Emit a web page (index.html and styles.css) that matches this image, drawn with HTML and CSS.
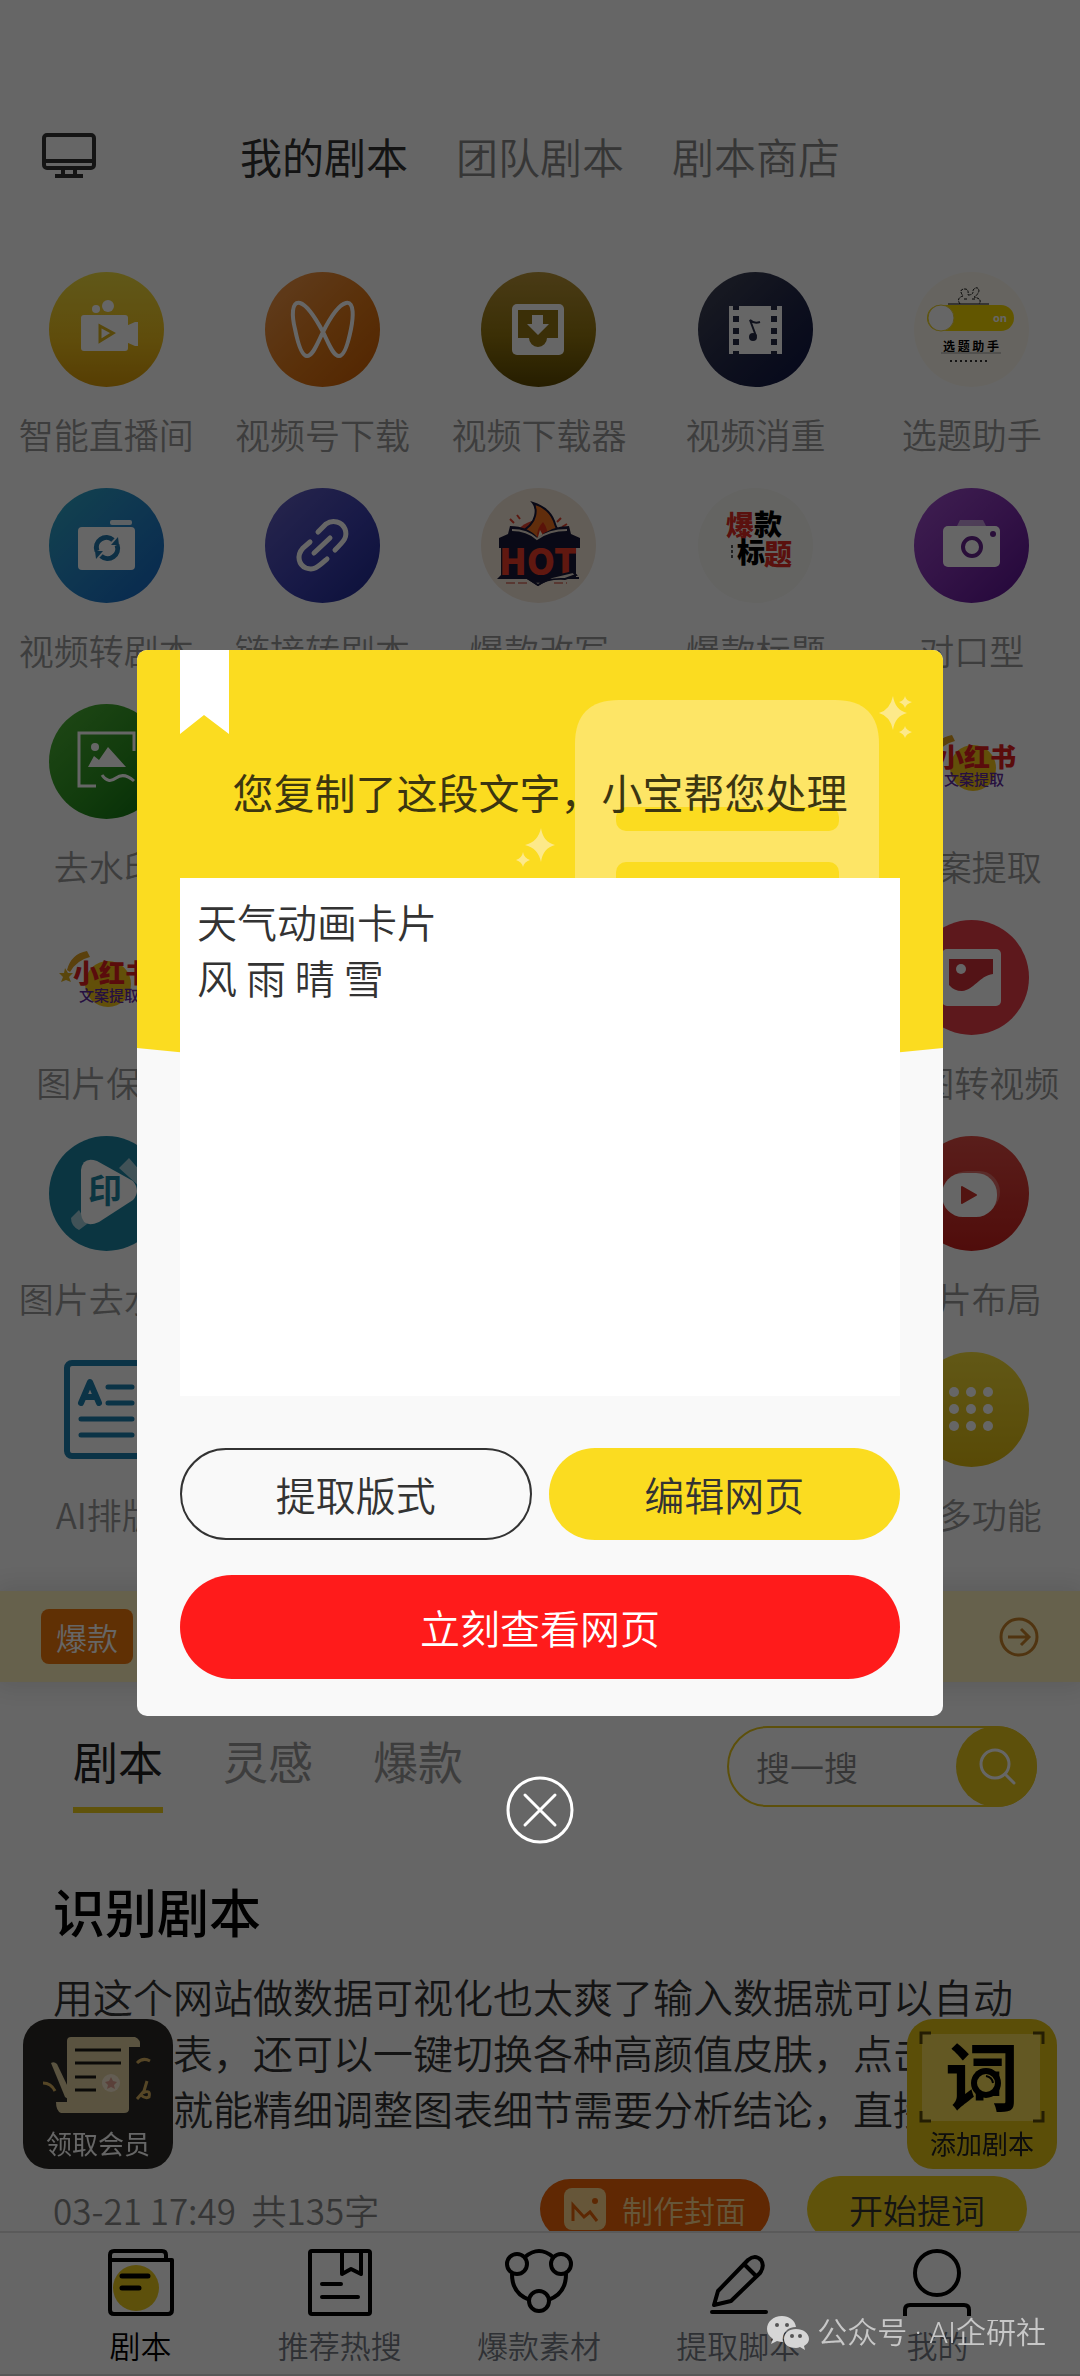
FILE: index.html
```html
<!DOCTYPE html>
<html lang="zh-CN">
<head>
    <meta charset="UTF-8" />
    <meta name="viewport" content="width=device-width, initial-scale=1">
    <title>我的剧本</title>
    <link rel="stylesheet" href="styles.css">
</head>
<body>
    <!-- shared logo, used by two tools -->
    <svg class="defs" aria-hidden="true">
        <symbol id="xhs" viewBox="0 0 115 115">
            <circle cx="59" cy="64" r="23" fill="#f5c518" />
            <path d="M18 50 Q22 34 38 31 L41 37 Q28 40 21 52 Z" fill="#e0a020" />
            <path d="M16 48 L19 53 L24 53 L20 57 L22 62 L17 60 L12 62 L14 57 L10 53 L15 53 Z" fill="#e0b020" />
            <text x="63" y="63" class="xhs-name">小红书</text>
            <text x="60" y="81" class="xhs-sub">文案提取</text>
        </symbol>
    </svg>

    <div class="app">
        <main class="page">
            <header class="topbar">
                <button class="screen-btn" aria-label="投屏">
                    <svg viewBox="0 0 54 46" fill="none" stroke="#333" stroke-width="4" stroke-linejoin="round">
                        <rect x="2" y="2" width="50" height="33" rx="3" />
                        <path d="M2 28 H52 M21 36 V42 M33 36 V42 M13 43 H41" />
                    </svg>
                </button>
                <nav class="top-tabs">
                    <a href="#" class="active">我的剧本</a>
                    <a href="#">团队剧本</a>
                    <a href="#">剧本商店</a>
                </nav>
            </header>

            <section class="tools">
                <a href="#" class="tool">
                    <svg class="tool-icon bg-yellow" viewBox="0 0 115 115" fill="#fff">
                        <circle cx="47" cy="37" r="4" />
                        <circle cx="59" cy="34" r="6" />
                        <rect x="32" y="43" width="47" height="36" rx="3" />
                        <path d="M77 54 L86 50 H89 V74 H86 L77 70 Z" />
                        <path d="M51 54 L64 61 L51 69 Z" fill="none" stroke="#dcb41c" stroke-width="3" />
                    </svg>
                    <span>智能直播间</span>
                </a>
                <a href="#" class="tool">
                    <svg class="tool-icon bg-orange" viewBox="0 0 115 115" fill="none" stroke="#fff" stroke-width="4">
                        <path d="M58 60 C50 45 42 33 35 31 C26 29 27 45 30 57 C33 72 37 84 42 84 C48 84 52 72 58 60 C64 48 73 33 81 31 C90 29 88 47 86 57 C83 72 79 84 74 84 C68 84 64 72 58 60 Z" />
                    </svg>
                    <span>视频号下载</span>
                </a>
                <a href="#" class="tool">
                    <svg class="tool-icon bg-olive" viewBox="0 0 115 115" fill="#fff">
                        <rect x="31" y="32" width="52" height="51" rx="5" />
                        <path d="M37 38 H77 V66 H66 A9 9 0 0 1 48 66 H37 Z" fill="#947613" />
                        <path d="M51 43 H62 V52 H68 L57 63 L46 52 H51 Z" />
                    </svg>
                    <span>视频下载器</span>
                </a>
                <a href="#" class="tool">
                    <svg class="tool-icon bg-navy" viewBox="0 0 115 115" fill="#fff">
                        <rect x="31" y="34" width="53" height="48" />
                        <path d="M35 34 h6 v4 h-6 Z M35 44 h6 v6 h-6 Z M35 56 h6 v6 h-6 Z M35 67 h6 v6 h-6 Z M35 79 h6 v3 h-6 Z M73 34 h6 v4 h-6 Z M73 44 h6 v6 h-6 Z M73 56 h6 v6 h-6 Z M73 67 h6 v6 h-6 Z M73 79 h6 v3 h-6 Z" fill="#262c48" />
                        <circle cx="55" cy="65" r="4" fill="#262c48" />
                        <path d="M58 64 L52 48 Q56 52 62 50" fill="none" stroke="#262c48" stroke-width="2" />
                    </svg>
                    <span>视频消重</span>
                </a>
                <a href="#" class="tool">
                    <svg class="tool-icon bg-cream" viewBox="0 0 115 115">
                        <path d="M46 32 Q42 26 49 24 Q44 17 51 17 Q55 17 54 23 Q60 23 59 18 Q64 13 65 19 Q63 24 60 25 Q69 27 65 32 M50 27 h3 M58 27 h3" fill="none" stroke="#111" stroke-dasharray="3 1" />
                        <rect x="13" y="33" width="87" height="26" rx="13" fill="#f5d800" />
                        <path d="M34 32 H75" stroke="#111" stroke-width="1" />
                        <circle cx="27" cy="46" r="13" fill="#fff" stroke="#e8cf3a" />
                        <text x="86" y="50" class="pick-on">on</text>
                        <text x="57" y="79" class="pick-name">选 题 助 手</text>
                        <path d="M27 81 H87" stroke="#999" stroke-width="1" />
                        <path d="M36 89 H76" stroke="#333" stroke-width="2" stroke-dasharray="2 3" />
                    </svg>
                    <span>选题助手</span>
                </a>

                <a href="#" class="tool">
                    <svg class="tool-icon bg-blue" viewBox="0 0 115 115" fill="#fff">
                        <rect x="61" y="32" width="22" height="5" rx="2" opacity="0.9" />
                        <rect x="29" y="39" width="57" height="43" rx="4" />
                        <g fill="none" stroke="#2277ab" stroke-width="5">
                            <path d="M48 63 A10 10 0 0 1 64 52" />
                            <path d="M68 57 A10 10 0 0 1 52 68" />
                        </g>
                        <path d="M62 57 L70 57 L69 49 Z M54 63 L46 63 L47 71 Z" fill="#2277ab" />
                    </svg>
                    <span>视频转剧本</span>
                </a>
                <a href="#" class="tool">
                    <svg class="tool-icon bg-indigo" viewBox="0 0 115 115" fill="none" stroke="#fff" stroke-width="5" stroke-linecap="round">
                        <path d="M49 65 L65 50" />
                        <path d="M53 44 L61 36 C68 31 77 34 80 41 C83 49 79 53 70 62" />
                        <path d="M45 54 L38 60 C31 68 34 77 41 80 C49 83 53 79 62 71" />
                    </svg>
                    <span>链接转剧本</span>
                </a>
                <a href="#" class="tool">
                    <svg class="tool-icon bg-beige" viewBox="0 0 115 115">
                        <path d="M34 48 A25 22 0 0 1 82 48 Z" fill="#e0402c" />
                        <path d="M29 31 L33 35 M36 27 L39 31 M80 30 L76 34 M86 36 L81 39" stroke="#e0402c" stroke-width="2" />
                        <path d="M37 46 Q52 38 54 28 Q56 20 52 15 Q68 20 73 33 Q76 43 80 47 L68 53 H48 Z" fill="#f07020" stroke="#181838" stroke-width="2" />
                        <path d="M56 49 Q56 40 62 34 Q68 42 66 50 Z" fill="#e03018" />
                        <path d="M57 49 L59 42 L63 49 Z" fill="#fff0d0" />
                        <path d="M18 50 L27 46 L29 38 Q47 38 57 50 Q70 38 88 38 L90 46 L99 50 V60 H95 V89 H98 V91 H70 L57 98 L46 91 H16 L20 87 V60 H18 Z" fill="#181838" />
                        <path d="M31 42 Q46 42 56 51 Q68 42 86 42" fill="none" stroke="#e8ddd0" stroke-width="2" />
                        <text x="57" y="87" class="hot-text">HOT</text>
                        <path d="M46 90 Q57 98 71 89 L92 84 L95 87 L84 91 Q66 90 57 97 Z" fill="#e8ddd0" stroke="#181838" stroke-width="2" />
                        <path d="M25 95 H48 M73 95 H86" stroke="#c03020" stroke-dasharray="9 3" />
                    </svg>
                    <span>爆款改写</span>
                </a>
                <a href="#" class="tool">
                    <svg class="tool-icon bg-grey" viewBox="0 0 115 115">
                        <text x="28" y="48" class="brush red">爆</text>
                        <text x="56" y="47" class="brush">款</text>
                        <text x="39" y="75" class="brush">标</text>
                        <text x="66" y="77" class="brush red">题</text>
                        <path d="M34 57 V72" stroke="#555" stroke-width="2" stroke-dasharray="3 2" />
                    </svg>
                    <span>爆款标题</span>
                </a>
                <a href="#" class="tool">
                    <svg class="tool-icon bg-purple" viewBox="0 0 115 115" fill="#fff">
                        <path d="M43 38 L46 32 H69 L72 38 Z" opacity="0.5" />
                        <rect x="29" y="38" width="57" height="41" rx="5" />
                        <circle cx="58" cy="59" r="9" fill="none" stroke="#66258f" stroke-width="4" />
                        <circle cx="79" cy="46" r="3" fill="#66258f" />
                    </svg>
                    <span>对口型</span>
                </a>

                <a href="#" class="tool">
                    <svg class="tool-icon bg-green" viewBox="0 0 115 115" fill="#fff">
                        <path d="M85 47 V29 H30 V82 H47 M53 71 Q59 80 67 74 T85 77" fill="none" stroke="#fff" stroke-width="3" />
                        <circle cx="46" cy="43" r="4" />
                        <path d="M39 63 L45 52 L50 56 L59 43 L77 63 Z" />
                    </svg>
                    <span>去水印</span>
                </a>
                <a href="#" class="tool last">
                    <svg class="tool-icon"><use href="#xhs" /></svg>
                    <span>文案提取</span>
                </a>

                <a href="#" class="tool">
                    <svg class="tool-icon"><use href="#xhs" /></svg>
                    <span>图片保存</span>
                </a>
                <a href="#" class="tool last">
                    <svg class="tool-icon bg-crimson" viewBox="0 0 115 115" fill="#fff">
                        <rect x="28" y="29" width="59" height="57" rx="5" />
                        <path d="M35 39 H79 V54 C65 56 60 70 48 71 Q40 71 35 65 Z" fill="#d03038" />
                        <circle cx="47" cy="49" r="5" />
                    </svg>
                    <span>长图转视频</span>
                </a>

                <a href="#" class="tool">
                    <svg class="tool-icon bg-teal" viewBox="0 0 115 115" fill="#fff">
                        <path d="M70 32 L80 22 L92 36 L90 50 Z M30 74 L22 82 Q22 90 30 94 L38 88 Z" opacity="0.6" />
                        <path d="M32 34 Q34 20 48 25 L84 45 Q92 55 84 64 L50 86 Q34 93 32 78 Z" />
                        <text x="56" y="67" class="seal">印</text>
                    </svg>
                    <span>图片去水印</span>
                </a>
                <a href="#" class="tool last">
                    <svg class="tool-icon bg-red" viewBox="0 0 115 115" fill="#fff">
                        <rect x="32" y="35" width="54" height="42" rx="21" opacity="0.25" />
                        <rect x="28" y="37" width="55" height="44" rx="21" />
                        <path d="M48 51 L62 59 L48 67 Z" fill="#cc342c" stroke="#cc342c" stroke-width="2" stroke-linejoin="round" />
                    </svg>
                    <span>图片布局</span>
                </a>

                <a href="#" class="tool">
                    <svg class="tool-icon square" viewBox="0 0 115 115" fill="none" stroke="#1c7fae" stroke-width="6" stroke-linecap="round" stroke-linejoin="round">
                        <rect x="18" y="11" width="84" height="93" rx="5" />
                        <path d="M32 51 L41 30 L50 51 M35 45 H47" />
                        <path d="M59 35 H83 M59 51 H83 M32 67 H83 M32 83 H83" stroke-width="5" />
                    </svg>
                    <span>AI排版</span>
                </a>
                <a href="#" class="tool last">
                    <svg class="tool-icon bg-lemon" viewBox="0 0 115 115" fill="#fff">
                        <circle cx="40" cy="40" r="5" /><circle cx="57" cy="40" r="5" /><circle cx="74" cy="40" r="5" />
                        <circle cx="40" cy="57" r="5" /><circle cx="57" cy="57" r="5" /><circle cx="74" cy="57" r="5" />
                        <circle cx="40" cy="74" r="5" /><circle cx="57" cy="74" r="5" /><circle cx="74" cy="74" r="5" />
                    </svg>
                    <span>更多功能</span>
                </a>
            </section>

            <a href="#" class="notice">
                <span class="notice-tag">爆款</span>
                <svg class="notice-arrow" viewBox="0 0 40 40" fill="none" stroke="#c8822a" stroke-width="3">
                    <circle cx="20" cy="20" r="18" />
                    <path d="M9 20 H30 M22 12 L30 20 L22 28" />
                </svg>
            </a>

            <section class="filter">
                <nav class="filter-tabs">
                    <a href="#" class="active">剧本</a>
                    <a href="#">灵感</a>
                    <a href="#">爆款</a>
                </nav>
                <form class="search">
                    <input type="text" placeholder="搜一搜" aria-label="搜一搜">
                    <button type="button" aria-label="搜索">
                        <svg viewBox="0 0 40 40" fill="none" stroke="#fff" stroke-width="3" stroke-linecap="round">
                            <circle cx="18" cy="17" r="14" />
                            <path d="M28 27 L37 36" />
                        </svg>
                    </button>
                </form>
            </section>

            <article class="script">
                <h2>识别剧本</h2>
                <p>用这个网站做数据可视化也太爽了输入数据就可以自动生成图表，还可以一键切换各种高颜值皮肤，点击图表的元素就能精细调整图表细节需要分析结论，直接提问</p>
                <div class="script-foot">
                    <span class="script-meta">03-21 17:49&nbsp; 共135字</span>
                    <button class="cover-btn">
                        <svg viewBox="0 0 42 42">
                            <rect width="42" height="42" rx="8" fill="#ffd890" />
                            <path d="M9 33 V17 L20 29 L26 24 L33 33" fill="none" stroke="#e86408" stroke-width="3" />
                            <circle cx="31" cy="13" r="3" fill="#e86408" />
                        </svg>
                        制作封面
                    </button>
                    <button class="start-btn">开始提词</button>
                </div>
            </article>
        </main>

        <nav class="tabbar">
            <a href="#" class="active">
                <svg viewBox="0 0 68 68" fill="none" stroke="#000" stroke-width="4" stroke-linecap="round" stroke-linejoin="round">
                    <circle cx="29" cy="40" r="23" fill="#e8c81c" stroke="none" />
                    <path d="M3 12 V7 Q3 3 7 3 H55 Q59 3 59 7 V12 M3 12 H65 V62 Q65 66 61 66 H7 Q3 66 3 62 Z" />
                    <path d="M15 28 H41 M15 40 H32" stroke-width="5" />
                </svg>
                <span>剧本</span>
            </a>
            <a href="#">
                <svg viewBox="0 0 68 68" fill="none" stroke="#000" stroke-width="4" stroke-linecap="round" stroke-linejoin="round">
                    <rect x="4" y="3" width="60" height="63" rx="2" />
                    <path d="M36 4 V26 L45 21 L55 26 V4 M16 36 H35 M16 49 H52" />
                </svg>
                <span>推荐热搜</span>
            </a>
            <a href="#">
                <svg viewBox="0 0 68 68" fill="none" stroke="#000" stroke-width="4">
                    <path d="M20 9 Q34 -3 48 9 M7 26 Q7 46 25 52 M61 26 Q61 46 43 52" />
                    <circle cx="12" cy="16" r="10" />
                    <circle cx="56" cy="16" r="10" />
                    <circle cx="34" cy="53" r="10" />
                </svg>
                <span>爆款素材</span>
            </a>
            <a href="#">
                <svg viewBox="0 0 68 68" fill="none" stroke="#000" stroke-width="4" stroke-linecap="round" stroke-linejoin="round">
                    <path d="M10 57 L14 43 L44 12 Q51 6 57 12 Q61 18 56 25 L27 53 Z M40 16 L52 28 M8 64 H62" />
                </svg>
                <span>提取脚本</span>
            </a>
            <a href="#">
                <svg viewBox="0 0 68 68" fill="none" stroke="#000" stroke-width="4">
                    <circle cx="34" cy="25" r="22" />
                    <path d="M2 68 V62 Q2 57 7 57 H61 Q66 57 66 62 V68" />
                </svg>
                <span>我的</span>
            </a>
        </nav>

        <button class="float float-vip">
            <svg viewBox="0 0 150 150">
                <path d="M44 22 Q44 18 48 18 H112 Q118 20 117 28 H106 V90 Q106 94 101 94 H38 Q33 92 33 83 H44 Z" fill="#e0d0a0" />
                <path d="M52 31 H98 M52 44 H98 M52 58 H73 M52 71 H73" stroke="#1c1a14" stroke-width="3" />
                <circle cx="88" cy="64" r="9" fill="#f8e8d0" />
                <path d="M88 58 L90 62 L94 63 L91 66 L92 70 L88 68 L84 70 L85 66 L82 63 L86 62 Z" fill="#e0a090" />
                <path d="M28 44 Q31 42 34 45 L45 68 V80 L42 78 Z" fill="#e0d0a0" />
                <path d="M20 64 Q28 64 32 72 M114 44 Q120 38 127 42 M124 62 L121 72 L114 80 M120 74 Q128 70 126 78 Q122 80 118 76" fill="none" stroke="#d8b060" stroke-width="3" />
            </svg>
            <span>领取会员</span>
        </button>
        <button class="float float-add">
            <svg viewBox="0 0 150 150">
                <rect x="15" y="15" width="118" height="87" fill="#f8dc58" />
                <path d="M14 25 V14 H24 M126 14 H136 V25 M136 92 V102 H126 M24 102 H14 V92" fill="none" stroke="#5a4a08" stroke-width="3" />
                <text x="75" y="86" class="word">词</text>
                <circle cx="79" cy="64" r="12" fill="#f8dc58" stroke="#000" stroke-width="6" />
                <path d="M79 57 Q85 58 86 64" fill="none" stroke="#000" stroke-width="2" />
            </svg>
            <span>添加剧本</span>
        </button>
    </div>

    <div class="overlay">
        <div class="dialog" role="dialog" aria-labelledby="dialogTitle">
            <svg class="dialog-art" viewBox="0 0 806 406" preserveAspectRatio="none" aria-hidden="true">
                <path d="M0 0 H806 V398 Q403 440 0 398 Z" fill="#fbdc20" />
                <path d="M43 0 H92 V84 L67 65 L43 84 Z" fill="#fff" />
                <path d="M438 406 V94 Q438 50 482 50 H698 Q742 50 742 94 V406 Z" fill="#fde566" />
                <rect x="479" y="157" width="223" height="24" rx="10" fill="#fbdc20" />
                <rect x="479" y="212" width="223" height="60" rx="10" fill="#fbdc20" />
                <g fill="#fde98a">
                    <path d="M756 46 Q758 60 770 63 Q758 66 756 80 Q753 66 742 63 Q753 60 756 46 Z" />
                    <path d="M768 46 Q769 51 775 52 Q769 54 768 58 Q767 54 762 52 Q767 51 768 46 Z" />
                    <path d="M768 76 Q769 80 775 82 Q769 84 768 88 Q767 84 762 82 Q767 80 768 76 Z" />
                    <path d="M404 178 Q406 192 418 195 Q406 198 404 212 Q401 198 388 195 Q401 192 404 178 Z" />
                    <path d="M386 202 Q387 208 393 210 Q387 212 386 217 Q385 212 379 210 Q385 208 386 202 Z" />
                </g>
            </svg>
            <h1 id="dialogTitle">您复制了这段文字，小宝帮您处理</h1>
            <textarea aria-labelledby="dialogTitle" spellcheck="false">天气动画卡片
风 雨 晴 雪</textarea>
            <div class="dialog-row">
                <button class="btn btn-line">提取版式</button>
                <button class="btn btn-yellow">编辑网页</button>
            </div>
            <button class="btn btn-red">立刻查看网页</button>
        </div>
        <button class="close" aria-label="关闭">
            <svg viewBox="0 0 68 68" fill="none" stroke="#fff" stroke-width="3" stroke-linecap="round">
                <circle cx="34" cy="34" r="32" />
                <path d="M19 19 L49 49 M49 19 L19 49" />
            </svg>
        </button>
    </div>

    <div class="watermark">
        <svg viewBox="0 0 42 34" fill="#d6d6d6">
            <path d="M15 0 C6 0 0 6 0 13 C0 17 2 20 6 23 L4 28 L10 25 Q13 26 16 26 C14 17 21 11 29 11 C28 4 22 0 15 0 Z" />
            <path d="M29 13 C22 13 17 17 17 23 C17 29 22 32 29 32 Q31 32 33 31 L38 34 L37 30 C40 28 42 26 42 23 C42 17 36 13 29 13 Z" />
            <g fill="#555">
                <circle cx="10" cy="9" r="2" /><circle cx="20" cy="9" r="2" />
                <circle cx="25" cy="20" r="2" /><circle cx="33" cy="20" r="2" />
            </g>
        </svg>
        <span>公众号 · AI企研社</span>
    </div>
</body>
</html>
```

FILE: styles.css
```css
:root {
    --yellow: #fbdc20;
    --text: #333;
    --muted: #999;
}

* {
    box-sizing: border-box;
}

body {
    margin: 0;
    font-family: "Noto Sans CJK SC", sans-serif;
    font-weight: 350;
    color: var(--text);
    background: #fff;
}

a {
    color: inherit;
    text-decoration: none;
}

button,
input,
textarea {
    font: inherit;
    color: inherit;
    border: none;
    padding: 0;
    background: none;
}

svg {
    display: block;
}

.defs {
    position: absolute;
    width: 0;
    height: 0;
}

.app {
    height: 100vh;
    display: flex;
    flex-direction: column;
    overflow: hidden;
}

.page {
    flex: 1;
    min-height: 0;
    overflow: hidden;
}

/* top bar */
.topbar {
    display: grid;
    grid-template-columns: 120px 1fr 120px;
    align-items: center;
    padding-top: 126px;
}

.screen-btn {
    width: 54px;
    margin-left: 42px;
}

.top-tabs {
    display: flex;
    justify-content: center;
    gap: 48px;
    font-size: 42px;
    line-height: 60px;
    color: #888;
}

.top-tabs .active {
    color: var(--text);
    font-weight: 400;
}

/* tools */
.tools {
    display: grid;
    grid-template-columns: repeat(5, 1fr);
    grid-auto-rows: 216px;
    margin-left: -2px;
    padding-top: 86px;
}

.tool {
    display: flex;
    flex-direction: column;
    align-items: center;
    gap: 22px;
    font-size: 35px;
    line-height: 50px;
    color: var(--muted);
    white-space: nowrap;
}

.tool.last {
    grid-column: 5;
}

.tool-icon {
    width: 115px;
    height: 115px;
    border-radius: 50%;
}

.tool-icon.square {
    border-radius: 0;
}

.bg-yellow { background: linear-gradient(#f0dc40, #eebe1c 60%, #d89a08); }
.bg-orange { background: linear-gradient(135deg, #f09a50, #e07818 55%, #cc5c00); }
.bg-olive { background: linear-gradient(#b89438, #94760f 55%, #5e4a00); }
.bg-navy { background: linear-gradient(135deg, #444858, #22284a 55%, #0c1444); }
.bg-cream { background: #fffbf0; }
.bg-blue { background: linear-gradient(135deg, #30a8c4, #2486c8 50%, #1464c4); }
.bg-indigo { background: linear-gradient(135deg, #6460c0, #3c40b0 55%, #1c2890); }
.bg-beige { background: #f6e8da; }
.bg-grey { background: #fafaf5; }
.bg-purple { background: linear-gradient(135deg, #a050cc, #8030b0 50%, #581090); }
.bg-green { background: linear-gradient(135deg, #50b438, #2c9420 55%, #0c7010); }
.bg-crimson { background: #e83c48; }
.bg-teal { background: #1c86a4; }
.bg-red { background: linear-gradient(#e04c44, #c8201c); }
.bg-lemon { background: linear-gradient(#f4dc38, #dcb810); }

.xhs-name {
    font-size: 26px;
    font-weight: 900;
    fill: #e02020;
    text-anchor: middle;
}

.xhs-sub {
    font-size: 15px;
    font-weight: 500;
    fill: #6028a0;
    text-anchor: middle;
}

.pick-on {
    font: 700 11px "Open Sans", sans-serif;
    fill: #fff;
    text-anchor: middle;
}

.pick-name {
    font-size: 12px;
    font-weight: 700;
    fill: #000;
    text-anchor: middle;
}

.hot-text {
    font-size: 36px;
    font-weight: 900;
    fill: #f03c28;
    text-anchor: middle;
}

.brush {
    font-size: 28px;
    font-weight: 900;
    fill: #000;
}

.brush.red {
    fill: #e02c24;
}

.seal {
    font-size: 34px;
    font-weight: 700;
    fill: #1c86a4;
    text-anchor: middle;
}

/* notice strip */
.notice {
    display: flex;
    align-items: center;
    justify-content: space-between;
    height: 91px;
    margin-top: 23px;
    padding: 0 41px;
    background: #fff2bd;
    box-shadow: 0 0 24px 6px rgba(0, 0, 0, 0.1);
}

.notice-tag {
    padding: 0 15px;
    border-radius: 8px;
    background: #f0780c;
    color: #fff;
    font-size: 31px;
    line-height: 55px;
}

.notice-arrow {
    width: 40px;
}

/* filter row */
.filter {
    display: flex;
    align-items: flex-start;
    justify-content: space-between;
    padding: 44px 43px 0 73px;
}

.filter-tabs {
    display: flex;
    gap: 60px;
    font-size: 45px;
    line-height: 70px;
    font-weight: 400;
    color: var(--muted);
}

.filter-tabs a {
    padding-bottom: 11px;
    border-bottom: 6px solid transparent;
}

.filter-tabs .active {
    color: #222;
    border-color: #f0d01c;
}

.search {
    display: flex;
    width: 310px;
    height: 81px;
    border: 2px solid #e8c81c;
    border-radius: 41px;
}

.search input {
    flex: 1;
    min-width: 0;
    padding-left: 27px;
    font-size: 34px;
    outline: none;
}

.search input::placeholder {
    color: #888;
    opacity: 1;
}

.search button {
    display: grid;
    place-items: center;
    width: 81px;
    margin: -2px;
    border-radius: 50%;
    background: #e8c81c;
}

.search button svg {
    width: 40px;
}

/* script card */
.script {
    padding: 60px 53px 0;
}

.script h2 {
    margin: 0;
    font-size: 52px;
    line-height: 76px;
    font-weight: 500;
    color: #000;
}

.script p {
    margin: 19px 0 0;
    height: 168px;
    overflow: hidden;
    font-size: 40px;
    line-height: 56px;
}

.script-foot {
    display: flex;
    align-items: center;
    height: 66px;
    margin-top: 40px;
}

.script-meta {
    flex: 1;
    font-size: 35px;
    color: #888;
}

.cover-btn {
    display: flex;
    align-items: center;
    justify-content: center;
    gap: 16px;
    width: 230px;
    height: 60px;
    border-radius: 30px;
    background: #f06408;
    color: #ffd890;
    font-size: 31px;
}

.cover-btn svg {
    width: 42px;
}

.start-btn {
    width: 220px;
    height: 66px;
    margin-left: 37px;
    border-radius: 33px;
    background: #f0d01c;
    font-size: 34px;
}

/* bottom tab bar */
.tabbar {
    display: grid;
    grid-template-columns: repeat(5, 1fr);
    height: 145px;
    padding: 15px 43px 0 41px;
    border-top: 2px solid #e2e2e2;
    border-bottom: 2px solid #ddd;
    background: #fff;
}

.tabbar a {
    display: flex;
    flex-direction: column;
    align-items: center;
    gap: 6px;
    font-size: 31px;
    line-height: 46px;
    color: #777b84;
}

.tabbar .active {
    color: #000;
}

.tabbar svg {
    width: 68px;
    height: 68px;
}

/* floating shortcuts */
.float {
    position: fixed;
    bottom: 207px;
    width: 150px;
    height: 150px;
    border-radius: 26px;
    font-size: 26px;
    font-weight: 400;
}

.float svg {
    position: absolute;
    inset: 0;
}

.float span {
    position: absolute;
    left: 0;
    right: 0;
    bottom: 8px;
    line-height: 36px;
}

.float-vip {
    left: 23px;
    background: #2c2a26;
    color: #fff;
}

.float-add {
    right: 23px;
    background: #e4c414;
    color: #222;
}

.word {
    font-size: 74px;
    font-weight: 700;
    fill: #000;
    text-anchor: middle;
}

/* dialog */
.overlay {
    position: fixed;
    inset: 0;
    display: flex;
    flex-direction: column;
    align-items: center;
    justify-content: center;
    gap: 60px;
    padding: 118px 137px 0;
    background: rgba(0, 0, 0, 0.6);
}

.dialog {
    position: relative;
    display: flex;
    flex-direction: column;
    width: 100%;
    padding: 108px 43px 37px;
    border-radius: 10px;
    overflow: hidden;
    background: #f9f9f9;
}

.dialog-art {
    position: absolute;
    top: 0;
    left: 0;
    width: 100%;
    height: 406px;
}

.dialog > :not(.dialog-art) {
    position: relative;
}

.dialog h1 {
    margin: 0 0 54px;
    font-size: 41px;
    line-height: 66px;
    font-weight: 400;
    text-align: center;
    color: #3c3610;
    white-space: nowrap;
}

.dialog textarea {
    display: block;
    width: 100%;
    height: 518px;
    padding: 15px 17px;
    border-radius: 0;
    background: #fff;
    font-size: 40px;
    line-height: 56px;
    resize: none;
    outline: none;
}

.dialog-row {
    display: flex;
    gap: 17px;
    margin: 52px 0 35px;
}

.btn {
    flex: 1;
    height: 92px;
    border: 2px solid transparent;
    border-radius: 52px;
    font-size: 40px;
    cursor: pointer;
}

.btn-line {
    border-color: #333;
}

.btn-yellow {
    background: var(--yellow);
}

.btn-red {
    flex: none;
    height: 104px;
    background: #ff1b1b;
    color: #fff;
}

.close {
    width: 68px;
    height: 68px;
    cursor: pointer;
}

.watermark {
    position: fixed;
    right: 34px;
    bottom: 22px;
    display: flex;
    align-items: center;
    gap: 8px;
    font-family: Roboto, "Noto Sans CJK SC", sans-serif;
    font-size: 30px;
    line-height: 42px;
    color: #c8c8c8;
}

.watermark svg {
    width: 42px;
}
```
